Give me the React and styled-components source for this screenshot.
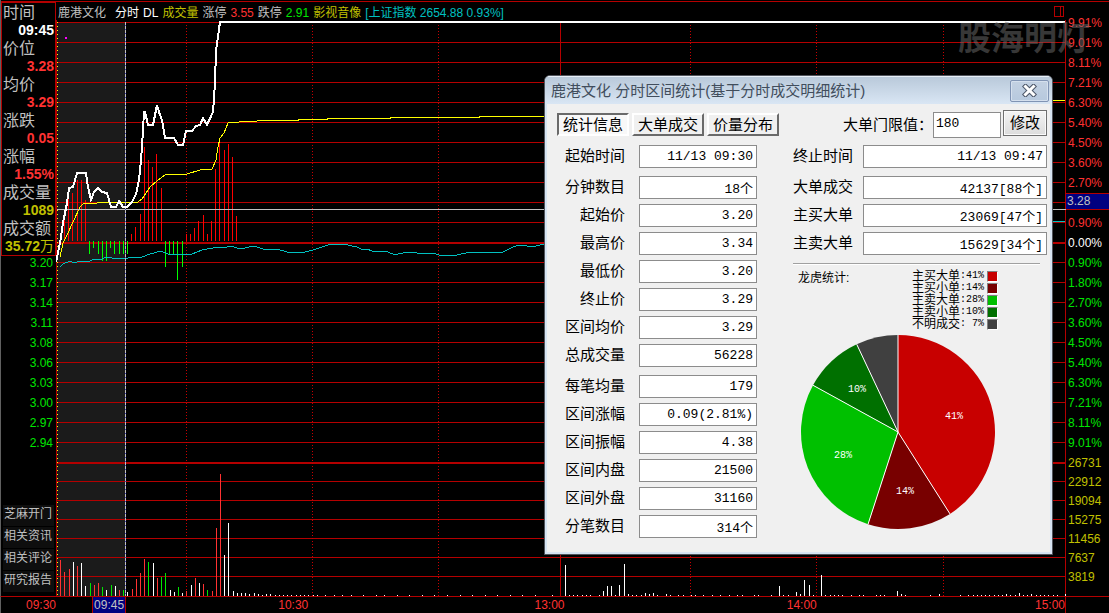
import React from "react";
import styled, { createGlobalStyle } from "styled-components";

const RED = "#b40000";
const UP = "#ff3232";
const DOWN = "#00e600";
const OLIVE = "#c0c000";
const GRAY = "#c0c0c0";
const CYAN = "#00c0c0";
const SANS = '"Liberation Sans", "Noto Sans CJK SC", sans-serif';
const MONO = '"Liberation Mono", "Noto Sans CJK SC", monospace';

const GlobalStyle = createGlobalStyle`
  *, *::before, *::after { box-sizing: border-box; }
  body { margin: 0; background: #000; font: 12px/16px ${SANS}; color: ${GRAY}; }
  button, input { font: inherit; color: inherit; margin: 0; }
`;

const Page = styled.main`
  position: relative;
  display: grid;
  grid-template-columns: 56px 1fr 43px;
  grid-template-rows: 20px auto 16px;
  min-width: 640px;
  background: #000;
`;

/* left side */
const SideBar = styled.aside`
  grid-row: 1 / 3;
  display: flex;
  flex-direction: column;
  padding-top: 1px;
  border-left: 1px solid #606060;
  border-bottom: 1px solid ${RED};
`;

const InfoPanel = styled.dl`
  margin: 0;
  border: 1px solid ${RED};
  border-top-width: 2px;
`;

const InfoLabel = styled.dt`
  height: 18px;
  padding-left: 1px;
  font-size: 16px;
  line-height: 20px;
  white-space: nowrap;
`;

const InfoValue = styled.dd`
  display: flex;
  justify-content: flex-end;
  margin: 0;
  padding-right: 1px;
  color: ${(p) => p.$color};
  font-size: 14px;
  font-weight: bold;
  line-height: 18px;
`;

const Unit = styled.span`
  font-weight: normal;
`;

const PriceAxis = styled.div`
  display: flex;
  flex-direction: column;
  gap: 6px;
  padding-right: 3px;
  text-align: right;
  color: ${DOWN};
  line-height: 14px;
`;

const Links = styled.nav`
  display: flex;
  flex-direction: column;
  gap: 1px;
  margin-top: auto;
  padding: 0 2px 4px 2px;
`;

const SideLink = styled.a`
  height: 21px;
  padding-left: 1px;
  background: #0e0e0e;
  color: ${GRAY};
  line-height: 18px;
  text-decoration: none;
  white-space: nowrap;
`;

/* top line */
const Header = styled.header`
  display: flex;
  gap: 4px;
  margin-top: 1px;
  padding: 3px 2px 0 2px;
  border-top: 1px solid ${RED};
  white-space: nowrap;
`;

const HeaderText = styled.span`
  color: ${(p) => p.$color};
`;

const StockName = styled(HeaderText)`
  margin-right: 5px;
`;

const PanelToggle = styled.button`
  align-self: flex-start;
  margin-left: auto;
  padding: 1px 0 0;
  border: 0;
  background: none;
  line-height: 0;
`;

/* chart */
const ChartSvg = styled.svg`
  display: block;
  width: 100%;
  height: 577px;
`;

/* right side */
const RightAxis = styled.aside`
  grid-row: 1 / 3;
  grid-column: 3;
  padding-top: 11px;
  margin-top: 1px;
  border-top: 1px solid ${RED};
  border-bottom: 1px solid ${RED};
`;

const PercentMark = styled.div`
  height: 20px;
  padding-left: 2px;
  color: ${(p) => p.$color};
  line-height: 20px;
`;

const VolumeMark = styled.div`
  height: 19px;
  padding-left: 2px;
  color: ${OLIVE};
  line-height: 19px;
`;

const CurrentPrice = styled.div`
  height: 17px;
  margin-bottom: 3px;
  padding-left: 1px;
  border: solid ${RED};
  border-width: 1px 0;
  background: #000080;
  line-height: 15px;
`;

/* bottom line */
const AxisStart = styled.div`
  border-left: 1px solid #606060;
  color: ${UP};
  text-align: right;
`;

const TimeAxis = styled.div`
  display: grid;
  grid-template-columns: 36fr 34fr 182fr 256fr 252fr 248fr;
  border-right: 1px solid ${RED};
  color: ${UP};
  text-align: right;
`;

const CursorTime = styled.span`
  grid-column: 2;
  border: solid ${RED};
  border-width: 0 1px;
  background: #000080;
  color: ${GRAY};
  text-align: center;
`;

const Watermark = styled.div`
  position: absolute;
  top: 16px;
  right: 19px;
  color: rgba(110, 110, 110, 0.5);
  font: bold 33px/40px "Noto Sans CJK SC", sans-serif;
  white-space: nowrap;
  pointer-events: none;
`;

/* dialog */
const Dialog = styled.section`
  position: absolute;
  top: 75px;
  right: 56px;
  width: 509px;
  border: 1px solid #50545c;
  border-radius: 6px 6px 0 0;
  background: #d7e4f2;
  color: #000;
  overflow: hidden;
`;

const TitleBar = styled.header`
  display: flex;
  align-items: center;
  justify-content: space-between;
  height: 28px;
  padding: 0 3px 0 6px;
  border-top: 1px solid #e8eff7;
  background: linear-gradient(#b9c9da, #d9e6f4);
`;

const Title = styled.h1`
  margin: 0;
  color: #414d5c;
  font-size: 15px;
  font-weight: normal;
  line-height: 24px;
`;

const CloseButton = styled.button`
  display: flex;
  align-items: center;
  justify-content: center;
  width: 39px;
  height: 22px;
  padding: 0;
  border: 1px solid #8094b4;
  border-radius: 2px;
  background: linear-gradient(#c3d1e2, #b7c9de);
  box-shadow: inset 0 0 0 1px #d5e0ee;
`;

const Body = styled.div`
  margin: 0 2px 2px;
  padding: 6px 3px 14px 10px;
  background: #f0f0f0;
  font-size: 15px;
`;

const ToolBar = styled.div`
  display: flex;
  justify-content: space-between;
  height: 28px;
  margin-bottom: 7px;
`;

const Tabs = styled.div`
  display: flex;
  gap: 3px;
  padding-top: 3px;
`;

const Tab = styled.button`
  width: 72px;
  height: 23px;
  padding: 0;
  border: 2px solid;
  border-color: ${(p) => (p.$active ? "#6a6a6a #fff #fff #6a6a6a" : "#fff #6a6a6a #6a6a6a #fff")};
  background: ${(p) => (p.$active ? "#f8f8f8" : "#f0f0f0")};
  line-height: 18px;
  white-space: nowrap;
`;

const Threshold = styled.form`
  display: flex;
`;

const ThresholdLabel = styled.label`
  padding-top: 3px;
  line-height: 24px;
`;

const ThresholdInput = styled.input`
  width: 68px;
  height: 26px;
  margin: 2px 2px 0 0;
  padding: 0 2px 4px;
  border: 1px solid #8c8c8c;
  background: #fff;
  font: 13px ${MONO};
`;

const ModifyButton = styled.button`
  width: 44px;
  height: 26px;
  padding: 0;
  border: 1px solid #707070;
  background: linear-gradient(#f4f4f4, #dcdcdc);
  box-shadow: inset 0 0 0 1px #fafafa;
  line-height: 22px;
`;

const Columns = styled.div`
  display: grid;
  grid-template-columns: 200px 1fr;
  gap: 36px;
`;

const FieldColumn = styled.div`
  display: flex;
  flex-direction: column;
  gap: 8px;
`;

const FieldGroup = styled.div`
  display: flex;
  flex-direction: column;
  gap: 5px;
`;

const Field = styled.label`
  display: grid;
  grid-template-columns: ${(p) => (p.$wide ? "60px 1fr" : "68px 1fr")};
  gap: ${(p) => (p.$wide ? "10px" : "14px")};
  height: 23px;
  line-height: 21px;
  text-align: right;
  white-space: nowrap;
`;

const FieldInput = styled.input`
  width: 100%;
  min-width: 0;
  height: 23px;
  padding: 0 3px 1px;
  border: 1px solid #8c8c8c;
  background: #fff;
  font: 13px ${MONO};
  text-align: right;
`;

const Divider = styled.hr`
  width: 247px;
  height: 2px;
  margin: 0 0 -3px;
  border: 0;
  border-top: 1px solid #a0a0a0;
  border-bottom: 1px solid #fff;
`;

const StatsHead = styled.div`
  display: flex;
  justify-content: space-between;
  padding: 0 49px 0 5px;
  font-size: 12px;
`;

const Legend = styled.ul`
  margin: 0;
  padding: 0;
  list-style: none;
`;

const LegendItem = styled.li`
  display: flex;
  align-items: center;
  height: 12px;
  line-height: 12px;
  white-space: pre;
`;

const LegendShare = styled.span`
  font: 10px/12px ${MONO};
`;

const Swatch = styled.span`
  width: 11px;
  height: 11px;
  margin-left: 3px;
  border: 1px solid;
  border-color: #808080 #fff #fff #808080;
  background: ${(p) => p.$color};
`;

const PieSvg = styled.svg`
  display: block;
  margin: -4px 0 0 6px;
`;

const infoRows = [
  ["时间", "09:45", "#fff"],
  ["价位", "3.28", UP],
  ["均价", "3.29", UP],
  ["涨跌", "0.05", UP],
  ["涨幅", "1.55%", UP],
  ["成交量", "1089", OLIVE],
  ["成交额", "35.72", OLIVE, "万"],
];
const prices = ["3.20", "3.17", "3.14", "3.11", "3.08", "3.06", "3.03", "3.00", "2.97", "2.94"];
const sideLinks = ["芝麻开门", "相关资讯", "相关评论", "研究报告"];
const upMarks = ["9.91%", "9.01%", "8.11%", "7.21%", "6.30%", "5.40%", "4.50%", "3.60%", "2.70%"];
const downMarks = ["0.90%", "1.80%", "2.70%", "3.60%", "4.50%", "5.40%", "6.30%", "7.21%", "8.11%", "9.01%"];
const volumeMarks = ["22912", "19094", "15275", "11456", "7637", "3819"];

const hLines = [
  22, 42, 62, 82, 102, 122, 142, 162, 182, 202, 222, 262, 282, 302, 322, 342, 362, 382, 402, 422, 442,
  481, 500, 519, 538, 557, 576, 596,
];
const dottedLines = [186, 312, 438, 690, 816, 943];

const pricePath =
  "56,262 58,253 61,237 63,223 67,203 69,188 73,187 77,173 86,173 88,187 91,200 94,192 98,188 102,192 107,193 111,207 116,207 119,201 123,207 127,207 132,202 136,194 139,180 141,160 142,147 144,112 145,112 148,125 153,125 157,105 159,112 162,120 165,138 174,138 178,145 183,145 186,131 192,131 196,126 200,125 203,118 207,125 213,112 215,83 216,50 218,37 220,22 1065,22";
const averagePath =
  "60,257 63,243 68,233 73,222 80,207 83,204 97,203 102,202 138,202 142,199 150,187 157,181 165,175 187,174 200,170 212,169 216,160 218,147 220,138 224,133 228,123 239,122 257,121 270,120 298,120 298,119 327,119 327,118 390,118 390,117 479,117 479,116 548,116 1050,100 1065,100";
const indexPath =
  "60,267 63,264 70,261 74,263 80,261 87,262 95,259 102,259 106,257 112,258 128,258 142,257 150,254 161,251 168,254 192,254 202,250 218,247 227,247 231,246 240,249 254,246 263,249 277,249 287,252 305,252 313,250 328,245 343,244 357,247 363,250 367,249 372,251 385,251 393,254 398,254 408,252 417,253 433,253 442,256 457,255 470,252 486,252 490,253 503,252 511,248 518,245 527,246 532,247 544,244 1050,221 1065,221";

const buyBars = [
  [64, 217], [68, 193], [72, 193], [77, 180], [81, 180], [85, 200], [131, 234], [135, 227], [140, 214],
  [144, 147], [148, 160], [152, 167], [156, 154], [161, 188], [186, 234], [190, 234], [194, 228], [198, 221],
  [203, 215], [207, 234], [211, 221], [215, 169], [219, 143], [224, 150], [228, 144], [232, 157], [236, 216],
];
const sellBars = [
  [89, 254], [93, 248], [98, 254], [102, 261], [106, 261], [110, 248], [114, 254], [119, 254], [123, 254],
  [127, 254], [165, 267], [169, 254], [173, 254], [177, 280], [182, 267],
];
const R = UP;
const W = "#ffffff";
const G = DOWN;
const volumeBars = [
  [60, 560, R], [64, 572, R], [69, 569, R], [73, 562, W], [77, 566, R], [81, 563, W], [85, 586, W],
  [90, 583, G], [94, 585, R], [98, 583, R], [102, 587, G], [106, 590, W], [111, 585, G], [115, 586, W],
  [119, 590, R], [123, 590, G], [127, 592, W], [132, 589, R], [136, 579, R], [140, 573, R], [144, 559, R],
  [148, 562, G], [153, 563, W], [157, 578, R], [161, 577, G], [165, 573, G], [170, 590, W], [174, 592, W],
  [178, 587, G], [182, 593, W], [186, 591, R], [191, 585, W], [195, 578, R], [199, 583, W], [203, 584, R],
  [207, 590, G], [212, 591, R], [216, 528, R], [220, 474, R], [224, 555, W], [228, 523, W], [233, 591, W],
  [237, 593, W], [241, 593, W], [245, 593, W], [249, 594, W], [254, 593, W], [258, 594, W], [262, 595, W],
  [266, 594, W], [270, 594, W], [565, 565, W], [603, 591, W], [607, 586, W], [611, 586, W], [619, 585, W],
  [624, 564, W], [628, 594, W], [645, 593, W], [649, 594, W], [653, 593, W], [666, 594, W], [779, 586, W],
  [796, 592, W], [800, 594, W], [804, 580, W], [809, 585, W], [821, 575, W], [897, 591, W], [901, 594, W],
  [939, 594, W], [1006, 594, W], [1019, 593, W], [1031, 594, W], [1065, 594, W],
];
const faintTrades = [
  275, 279, 283, 287, 291, 296, 300, 304, 308, 313, 317, 325, 334, 342, 351, 363, 376, 384, 397, 409, 422,
  434, 447, 460, 472, 485, 497, 510, 522, 535, 552, 569, 573, 577, 582, 586, 590, 599, 615, 632, 636, 641,
  657, 670, 678, 683, 691, 695, 703, 712, 720, 729, 737, 742, 754, 758, 771, 783, 788, 813, 825, 830, 834,
  838, 842, 851, 859, 863, 876, 880, 884, 905, 930, 960, 968, 973, 977, 981, 985, 989, 994, 998, 1002, 1010,
  1015, 1023, 1027, 1036, 1040, 1044, 1048, 1053, 1057,
];

function Chart() {
  return (
    <ChartSvg viewBox="56 20 1010 577" preserveAspectRatio="none" shapeRendering="crispEdges" role="img" aria-label="分时走势">
      <defs>
        <pattern id="dots" x="0" y="0" width="1" height="3" patternUnits="userSpaceOnUse">
          <rect width="1" height="1" y="1" fill="#c80000" />
        </pattern>
        <pattern id="yellow-dots" x="0" y="0" width="1" height="4" patternUnits="userSpaceOnUse">
          <rect width="1" height="1" y="2" fill="#ffff00" />
        </pattern>
      </defs>
      <rect x="57" y="22" width="68" height="574" fill="#1b1b1b" />
      {hLines.map((y) => (
        <rect key={y} x="56" y={y} width="1010" height="1" fill={RED} />
      ))}
      <rect x="56" y="242" width="1010" height="2" fill={RED} />
      <rect x="56" y="462" width="1010" height="2" fill={RED} />
      {dottedLines.map((x) => (
        <rect key={x} x={x} y="25" width="1" height="571" fill="url(#dots)" />
      ))}
      <rect x="560" y="22" width="1" height="574" fill={RED} />
      <rect x="56" y="20" width="1" height="577" fill={RED} />
      <rect x="1065" y="20" width="1" height="577" fill={RED} />
      <rect x="57" y="22" width="1" height="574" fill="url(#yellow-dots)" />
      <rect x="65" y="37" width="2" height="2" fill="#ff00ff" />
      {buyBars.map(([x, y]) => (
        <rect key={x} x={x} y={y} width="1" height={241 - y} fill="#ff0000" />
      ))}
      {sellBars.map(([x, y]) => (
        <rect key={x} x={x} y="241" width="1" height={y - 241} fill="#00ff00" />
      ))}
      {faintTrades.map((x) => (
        <rect key={x} x={x} y="595" width="1" height="1" fill="#ffffff" />
      ))}
      {volumeBars.map(([x, y, color]) => (
        <rect key={x} x={x} y={y} width="1" height={596 - y} fill={color} />
      ))}
      <polyline points={indexPath} fill="none" stroke={CYAN} />
      <polyline points={averagePath} fill="none" stroke="#ffff00" />
      <rect x="57" y="209" width="1009" height="1" fill={GRAY} />
      <path d="M125.5 22V596" stroke="#4040c0" />
      <path d="M125.5 22V596" stroke={GRAY} strokeDasharray="3 1" />
      <polyline points={pricePath} fill="none" stroke="#ffffff" strokeWidth="2" />
    </ChartSvg>
  );
}

const firstFields = [["起始时间", "11/13 09:30"]];
const priceFields = [
  ["分钟数目", "18个"],
  ["起始价", "3.20"],
  ["最高价", "3.34"],
  ["最低价", "3.20"],
  ["终止价", "3.29"],
  ["区间均价", "3.29"],
  ["总成交量", "56228"],
];
const rangeFields = [
  ["每笔均量", "179"],
  ["区间涨幅", "0.09(2.81%)"],
  ["区间振幅", "4.38"],
  ["区间内盘", "21500"],
  ["区间外盘", "31160"],
  ["分笔数目", "314个"],
];
const endFields = [["终止时间", "11/13 09:47"]];
const orderFields = [
  ["大单成交", "42137[88个]"],
  ["主买大单", "23069[47个]"],
  ["主卖大单", "15629[34个]"],
];

function Fields({ items, wide }) {
  return (
    <FieldGroup>
      {items.map(([label, value]) => (
        <Field key={label} $wide={wide}>
          {label}
          <FieldInput readOnly value={value} />
        </Field>
      ))}
    </FieldGroup>
  );
}

const slices = [
  { name: "主买大单", share: 41, color: "#c80000", x: 155, y: 82 },
  { name: "主买小单", share: 14, color: "#780000", x: 106, y: 157 },
  { name: "主卖大单", share: 28, color: "#00c000", x: 44, y: 121 },
  { name: "主卖小单", share: 10, color: "#007000", x: 58, y: 55 },
  { name: "不明成交", share: 7, color: "#404040" },
];

function Pie() {
  const cx = 99;
  const cy = 98;
  const r = 97;
  const point = (share) => {
    const a = (share / 100) * Math.PI * 2;
    return `${(cx + r * Math.sin(a)).toFixed(2)} ${(cy - r * Math.cos(a)).toFixed(2)}`;
  };
  let start = 0;
  const wedges = slices.map((s) => {
    const from = start;
    start += s.share;
    return { ...s, from: point(from), to: point(start) };
  });
  return (
    <PieSvg width="198" height="198" viewBox="0 0 198 198" role="img" aria-label="龙虎统计">
      {wedges.map((w) => (
        <path key={w.name} d={`M${cx} ${cy}L${w.from}A${r} ${r} 0 0 1 ${w.to}Z`} fill={w.color} />
      ))}
      {wedges.map((w) => (
        <path key={w.name} d={`M${cx} ${cy}L${w.from}`} stroke="#fff" />
      ))}
      {wedges
        .filter((w) => w.x)
        .map((w) => (
          <text key={w.name} x={w.x} y={w.y + 3} fill="#fff" fontFamily="Liberation Mono, monospace" fontSize="10" textAnchor="middle">
            {w.share}%
          </text>
        ))}
    </PieSvg>
  );
}

function StatsDialog() {
  return (
    <Dialog role="dialog" aria-labelledby="dialog-title">
      <TitleBar>
        <Title id="dialog-title">鹿港文化 分时区间统计(基于分时成交明细统计)</Title>
        <CloseButton type="button" aria-label="关闭">
          <svg width="15" height="13" viewBox="0 0 15 13">
            <path d="M3.500 2.500L11.500 10.500M11.500 2.500L3.500 10.500" stroke="#4c5668" strokeWidth="5" strokeLinecap="square" />
            <path d="M3.500 2.500L11.500 10.500M11.500 2.500L3.500 10.500" stroke="#fff" strokeWidth="3" strokeLinecap="square" />
          </svg>
        </CloseButton>
      </TitleBar>
      <Body>
        <ToolBar>
          <Tabs>
            <Tab type="button" $active>统计信息</Tab>
            <Tab type="button">大单成交</Tab>
            <Tab type="button">价量分布</Tab>
          </Tabs>
          <Threshold onSubmit={(e) => e.preventDefault()}>
            <ThresholdLabel htmlFor="threshold">大单门限值：</ThresholdLabel>
            <ThresholdInput id="threshold" defaultValue="180" />
            <ModifyButton>修改</ModifyButton>
          </Threshold>
        </ToolBar>
        <Columns>
          <FieldColumn>
            <Fields items={firstFields} />
            <Fields items={priceFields} />
            <Fields items={rangeFields} />
          </FieldColumn>
          <FieldColumn>
            <Fields items={endFields} wide />
            <Fields items={orderFields} wide />
            <Divider />
            <StatsHead>
              <span>龙虎统计:</span>
              <Legend>
                {slices.map((s) => (
                  <LegendItem key={s.name}>
                    {s.name}
                    <LegendShare>{`:${String(s.share).padStart(2, " ")}%`}</LegendShare>
                    <Swatch $color={s.color} />
                  </LegendItem>
                ))}
              </Legend>
            </StatsHead>
            <Pie />
          </FieldColumn>
        </Columns>
      </Body>
    </Dialog>
  );
}

export default function App() {
  return (
    <Page>
      <GlobalStyle />
      <SideBar>
        <InfoPanel>
          {infoRows.map(([label, value, color, unit]) => (
            <React.Fragment key={label}>
              <InfoLabel>{label}</InfoLabel>
              <InfoValue $color={color}>
                {value}
                {unit && <Unit>{unit}</Unit>}
              </InfoValue>
            </React.Fragment>
          ))}
        </InfoPanel>
        <PriceAxis>
          {prices.map((p) => (
            <span key={p}>{p}</span>
          ))}
        </PriceAxis>
        <Links>
          {sideLinks.map((t) => (
            <SideLink key={t} href="#">{t}</SideLink>
          ))}
        </Links>
      </SideBar>
      <Header>
        <StockName $color={GRAY}>鹿港文化</StockName>
        <HeaderText $color="#fff">分时</HeaderText>
        <HeaderText $color="#fff">DL</HeaderText>
        <HeaderText $color={OLIVE}>成交量</HeaderText>
        <HeaderText $color={GRAY}>涨停</HeaderText>
        <HeaderText $color={UP}>3.55</HeaderText>
        <HeaderText $color={GRAY}>跌停</HeaderText>
        <HeaderText $color={DOWN}>2.91</HeaderText>
        <HeaderText $color={OLIVE}>影视音像</HeaderText>
        <HeaderText $color={CYAN}>[上证指数 2654.88 0.93%]</HeaderText>
        <PanelToggle type="button" aria-label="切换面板">
          <svg width="10" height="11" viewBox="0 0 10 11" shapeRendering="crispEdges">
            <path d="M.5 .5H9.5V10.5H.5ZM6.500 .5V10.5" fill="none" stroke={RED} />
          </svg>
        </PanelToggle>
      </Header>
      <RightAxis>
        {upMarks.map((m) => (
          <PercentMark key={m} $color={UP}>{m}</PercentMark>
        ))}
        <CurrentPrice>3.28</CurrentPrice>
        <PercentMark $color={UP}>0.90%</PercentMark>
        <PercentMark $color="#fff">0.00%</PercentMark>
        {downMarks.map((m) => (
          <PercentMark key={m} $color={DOWN}>{m}</PercentMark>
        ))}
        <PercentMark $color={OLIVE}>26731</PercentMark>
        {volumeMarks.map((m) => (
          <VolumeMark key={m}>{m}</VolumeMark>
        ))}
      </RightAxis>
      <Chart />
      <AxisStart>09:30</AxisStart>
      <TimeAxis>
        <CursorTime>09:45</CursorTime>
        <span>10:30</span>
        <span>13:00</span>
        <span>14:00</span>
        <span>15:00</span>
      </TimeAxis>
      <Watermark>股海明灯</Watermark>
      <StatsDialog />
    </Page>
  );
}
